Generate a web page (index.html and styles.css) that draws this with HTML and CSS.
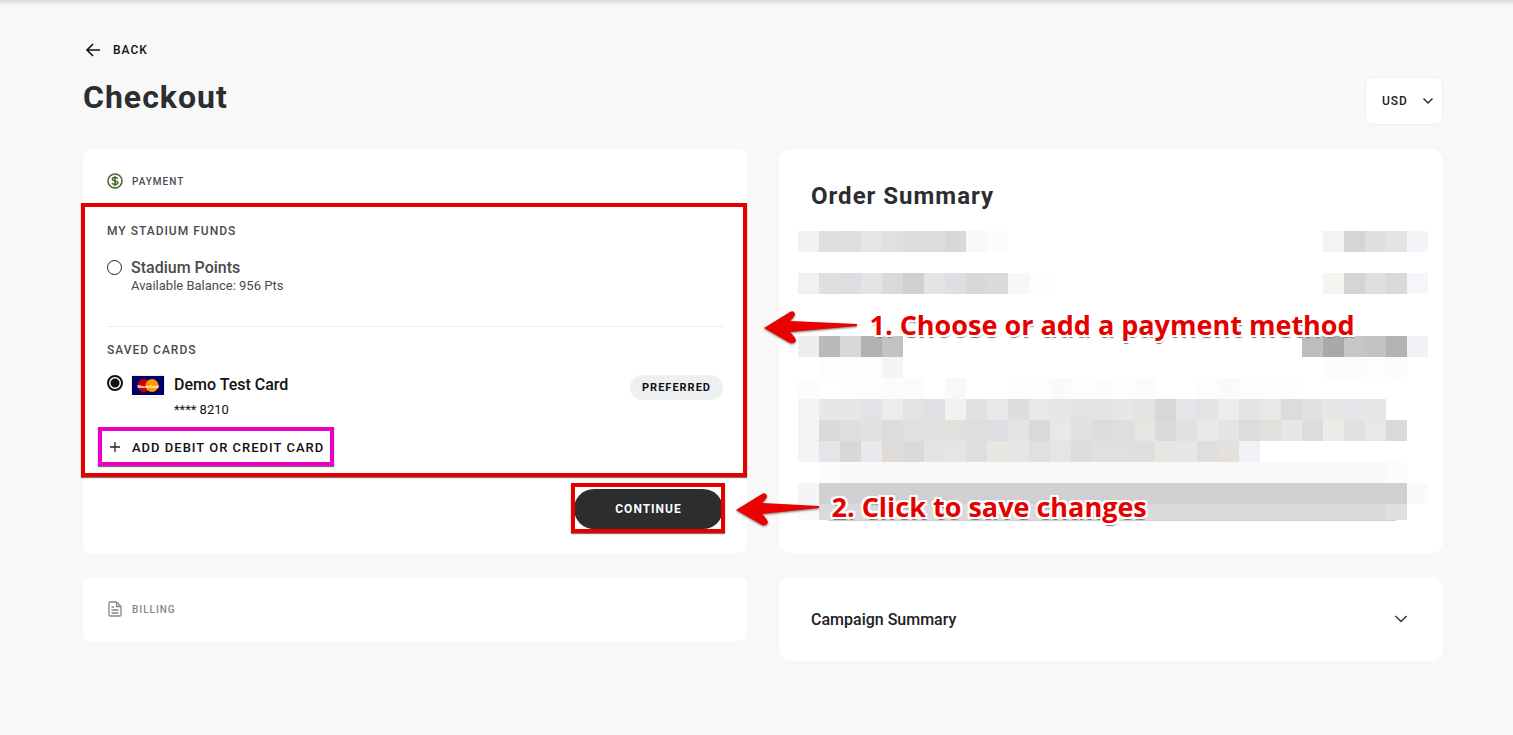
FILE: index.html
```
<!DOCTYPE html>
<html lang="en">
<head>
  <meta charset="UTF-8">
  <meta name="viewport" content="width=device-width, initial-scale=1.0">
  <title>Checkout</title>
  <link rel="stylesheet" href="styles.css">
</head>
<body>
  <main class="page">
    <a class="back" href="#">
      <svg width="20" height="16" viewBox="0 0 20 16"><path d="M17 8H4M10 2L4 8l6 6" fill="none" stroke="#111" stroke-width="1.6"/></svg>
      Back
    </a>

    <header class="page-header">
      <h1>Checkout</h1>
      <div class="currency">
        <select aria-label="Currency">
          <option>USD</option>
        </select>
        <svg class="chevron" width="12" height="8" viewBox="0 0 12 8"><path d="M1.5 1.5L6 6l4.500-4.500" fill="none" stroke="#222" stroke-width="1.4"/></svg>
      </div>
    </header>

    <div class="columns">
      <div class="column">
        <section class="card payment">
          <h2 class="step">
            <svg width="16" height="16" viewBox="0 0 16 16" fill="none" stroke="#44682c" stroke-width="1.5"><circle cx="8" cy="8" r="7"/><path d="M10.800 5.700C10.300 4.800 9.200 4.500 8 4.500c-1.500 0-2.700.6-2.700 1.700C5.300 8.600 10.900 7.300 10.900 9.800c0 1.100-1.300 1.700-2.900 1.700-1.300 0-2.500-.5-3-1.500M8 2.800v10.400"/></svg>
            Payment
          </h2>

          <div class="methods">
            <h3>My Stadium Funds</h3>
            <div class="option">
              <input type="radio" name="method" id="points">
              <label for="points">
                <span class="option-name muted">Stadium Points</span>
                <span class="balance">Available Balance: 956 Pts</span>
              </label>
            </div>

            <hr>

            <h3>Saved Cards</h3>
            <div class="option saved">
              <input type="radio" name="method" id="card" checked>
              <svg class="card-logo" width="34" height="23" viewBox="0 0 34 23">
                <rect x=".5" y=".5" width="33" height="22" fill="#fff" stroke="#eee"/>
                <rect x="1" y="1" width="32" height="19" fill="#000066"/>
                <circle cx="13" cy="10.500" r="6.500" fill="#cc0000"/>
                <circle cx="21" cy="10.500" r="6.500" fill="#ff9900"/>
                <text x="17" y="13" text-anchor="middle" class="logo-text">MasterCard</text>
              </svg>
              <label for="card">
                <span class="option-name">Demo Test Card</span>
                <span class="digits">**** 8210</span>
              </label>
              <span class="badge">Preferred</span>
            </div>

            <button class="add-card" type="button">
              <svg width="12" height="12" viewBox="0 0 12 12"><path d="M6 1v10M1 6h10" stroke="#222" stroke-width="1.300"/></svg>
              Add debit or credit card
            </button>
          </div>

          <div class="actions">
            <button class="continue" type="button">Continue</button>
          </div>
        </section>

        <section class="card billing">
          <h2 class="step disabled">
            <svg width="16" height="16" viewBox="0 0 16 16" fill="none" stroke="#85878c" stroke-width="1.300"><path d="M9.500 1H3.200Q2 1 2 2.200v11.600Q2 15 3.200 15h9.600q1.200 0 1.200-1.200V5.500zM9.500 1v4.500H14M4.500 6h2.500M4.500 9h7M4.500 12h7"/></svg>
            Billing
          </h2>
        </section>
      </div>

      <div class="column">
        <section class="card order">
          <h2>Order Summary</h2>
          <!-- order details are pixelated, cells are drawn by the script below -->
          <svg id="mosaic" class="mosaic" viewBox="0 0 630 290" shape-rendering="crispEdges"></svg>
        </section>

        <section class="card">
          <button class="campaign" type="button">
            Campaign Summary
            <svg width="14" height="10" viewBox="0 0 14 10"><path d="M1.500 2L7 7.500 12.500 2" fill="none" stroke="#333" stroke-width="1.500"/></svg>
          </button>
        </section>
      </div>
    </div>

    <!-- Annotations -->
    <div class="mark mark-methods"></div>
    <div class="mark mark-add"></div>
    <div class="mark mark-continue"></div>
    <div class="note note-choose">
      <svg width="96" height="36" viewBox="0 0 96 36"><path d="M1 18L27 2q4-2 5 2 0 2-5 7l67 3v2l-67 6q5 5 6 8-1 4-6 3z" fill="#e90000"/></svg>
      <span>1. Choose or add a payment method</span>
    </div>
    <div class="note note-save">
      <svg width="86" height="36" viewBox="0 0 86 36"><path d="M1 18L27 2q4-2 5 2 0 2-5 7l57 3v2l-57 6q5 5 6 8-1 4-6 3z" fill="#e90000"/></svg>
      <span>2. Click to save changes</span>
    </div>
  </main>

  <script>
    // each row: [row number, first column, colors]
    const rows = [
      [0, 0, 'f1f1f0 dfdfdf dedede e4e6e5 dfe1e0 dcdcdc dddddd d8d8d8 f8f8f8 fcfcfc'],
      [0, 25, 'f3f3f3 d5d5d5 dfdfdf e4e4e4 f4f5f8'],
      [2, 0, 'f1f1ef dfdfdf dddee1 e4e4e4 dadada d0d0d0 e4e4e4 dedfe2 d8d8d8 dadada f7f7f7 fcfefe'],
      [2, 25, 'f4f4f1 d5d5d5 dfdfdf d8d9db f5f6f9'],
      [5, 0, 'efeeec b8babc d6d8d7 b3b1af c2c3c5'],
      [5, 24, 'c0bebc a8a9ab c5c7c6 c3c3c3 b3b3b1 f1f2f7'],
      [6, 1, 'fdfdfd fdfdfd fdfdfd f4f4f4'],
      [6, 25, 'fcfcfc fcfcfc fdfdfd fcfcfc'],
      [7, 0, 'fcfcfa ffffff fdfdfd fdfdfd fcfcfc fbfbfa ffffff f8f8f8 ffffff ffffff fefefe fdfdfd fafafa fcfefe fcfcfc fdfdfd fbfbfb'],
      [7, 19, 'fcfefd fafafa fdfdfd fdfdfd fefefe'],
      [8, 0, 'f4f4f4 e6e8e7 e5e8e6 e1e3e6 ececec e4e3e0 dfe1e4 f2f2f2 e2e1df e8e8e8 dddddd e8e8e8 e8e6e4 e2e4e2 e3e3e3 e7e7e7 e4e4e4 d5d8d6 e3e5e8 e3e3e3 eaedeb e3e3e3 e8e8e8 dcdcdc e1e3e1 e7e7e7 e4e6e9 e4e7e5'],
      [9, 0, 'f3f3f3 d9d9d9 dfdfdf e1e1e1 dcdcdc e0e0e0 e0e0e0 e1e0dc dedede dddee1 e3e3e3 d9d9d9 e8e8e8 e1e1e1 dcdcdc dddee1 e5e5e2 dadada e0e0e0 e8e8e8 e4e4e4 dcdcdc e0e0dd e5e8e6 dcdcdc ebebe8 dfe2e0 e8e8e8 d9d9d9'],
      [10, 0, 'f3f3f3 e3e5e8 dad8d6 e7e9ec dedbd9 d9d9d9 e3e3e3 e5e5e5 dcdee1 e7e7e4 e4e7e5 dee1df e5e5e5 dddddd e0e0e0 e0e0e0 dde0de e6e6e3 e6e6e6 dedede e3e0de f0f1f5'],
      [11, 1, 'fcfcfc' + ' f9f9f9'.repeat(26) + ' fcfcfc'],
      [12, 0, 'f5f5f5' + ' d0d0d2'.repeat(28) + ' fafafa'],
      [13, 0, 'f9f9f9' + ' dadadc'.repeat(27) + ' dfdfdf']
    ];
    const size = 21;
    let cells = '';
    rows.forEach(([row, start, colors]) => {
      const height = row === 13 ? 16 : size;
      colors.split(' ').forEach((color, i) => {
        cells += `<rect x="${(start + i) * size}" y="${row * size}" width="${size}" height="${height}" fill="#${color}"/>`;
      });
    });
    cells += '<rect x="30" y="289" width="568" height="1" fill="#d0d0d2"/>';
    document.getElementById('mosaic').innerHTML = cells;
  </script>
</body>
</html>
```
FILE: styles.css
```
* {
  box-sizing: border-box;
}
body {
  margin: 0;
  background: linear-gradient(#d8d8d8, #f8f8f8 5px) no-repeat #f8f8f8;
  color: #111;
  font-family: Roboto, "Liberation Sans", sans-serif;
}
h1, h2, h3 {
  margin: 0;
}
button, select {
  font-family: inherit;
  border: none;
  background: none;
  cursor: pointer;
}
svg {
  flex-shrink: 0;
}
.page {
  position: relative;
  padding: 40px 70px 74px 83px;
}
.back {
  display: inline-flex;
  align-items: center;
  gap: 10px;
  height: 20px;
  color: #111;
  font-size: 12px;
  font-weight: 500;
  letter-spacing: 1px;
  text-decoration: none;
  text-transform: uppercase;
}
.page-header {
  display: flex;
  justify-content: space-between;
  align-items: flex-start;
  margin-top: 15px;
  margin-bottom: 24px;
}
h1 {
  color: #2b2d2f;
  font-size: 32px;
  line-height: 40px;
  letter-spacing: 1px;
}
.currency {
  position: relative;
}
.currency select {
  appearance: none;
  width: 78px;
  height: 48px;
  padding: 0 16px;
  border: 1px solid #eee;
  border-radius: 8px;
  background-color: #fff;
  color: #222;
  font-size: 12px;
  font-weight: 500;
  letter-spacing: 1px;
}
.chevron {
  position: absolute;
  right: 9px;
  top: 20px;
  pointer-events: none;
}

/* Cards */
.columns {
  display: grid;
  grid-template-columns: 1fr 1fr;
  gap: 32px;
  align-items: start;
}
.column {
  display: flex;
  flex-direction: column;
  gap: 24px;
}
.card {
  border-radius: 12px;
  background-color: #fff;
}
.payment, .billing {
  padding: 24px;
  border-radius: 8px;
}
.step {
  display: flex;
  align-items: center;
  gap: 9px;
  height: 16px;
  color: #4a4b4d;
  font-size: 10px;
  font-weight: 500;
  letter-spacing: 1px;
  text-transform: uppercase;
}
.disabled {
  color: #85878c;
}
.methods {
  padding-top: 34px;
}
h3 {
  color: #4a4b4d;
  font-size: 12px;
  font-weight: 500;
  line-height: 16px;
  letter-spacing: 1px;
  text-transform: uppercase;
}
.option {
  display: flex;
  align-items: flex-start;
  margin-top: 19px;
}
.option input {
  appearance: none;
  flex-shrink: 0;
  width: 15px;
  height: 15px;
  margin: 2px 9px 0 0;
  border: 1px solid #222;
  border-radius: 50%;
}
.option input:checked {
  width: 16px;
  height: 16px;
  margin: 0 8px 0 0;
  border: 2px solid #111;
  background: radial-gradient(#111 4px, #fff 5px);
}
.option label {
  display: flex;
  flex-direction: column;
}
.option-name {
  font-size: 16px;
  font-weight: 500;
  line-height: 20px;
}
.muted, .balance {
  color: #4a4b4d;
}
.balance {
  font-size: 13px;
  line-height: 16px;
}
hr {
  margin: 32px 0 15px;
  border: none;
  border-top: 1px solid #eee;
}
.saved {
  margin-top: 17px;
}
.card-logo {
  margin-right: 9px;
}
.logo-text {
  fill: #fff;
  font-size: 4px;
  font-weight: bold;
}
.digits {
  margin-top: 6px;
  font-size: 13px;
  line-height: 18px;
}
.badge {
  margin-left: auto;
  padding: 0 12px;
  border-radius: 13px;
  background-color: #eeeff1;
  font-size: 11px;
  font-weight: 700;
  line-height: 25px;
  letter-spacing: 1px;
  text-transform: uppercase;
}
.add-card {
  display: flex;
  align-items: center;
  gap: 11px;
  height: 32px;
  margin-top: 12px;
  padding: 0 2px;
  color: #111;
  font-size: 13px;
  font-weight: 500;
  letter-spacing: 1px;
  text-transform: uppercase;
}
.actions {
  display: flex;
  justify-content: flex-end;
  margin-top: 26px;
}
.continue {
  width: 149px;
  height: 40px;
  border-radius: 20px;
  background-color: #2b2d2f;
  color: #fff;
  font-size: 12px;
  font-weight: 700;
  letter-spacing: 1px;
  text-transform: uppercase;
}
.order {
  padding-bottom: 32px;
}
.order h2 {
  padding: 32px 32px 20px;
  color: #2b2d2f;
  font-size: 24px;
  line-height: 30px;
  letter-spacing: 1px;
}
.mosaic {
  display: block;
  margin: 0 15px 0 19px;
}
.campaign {
  display: flex;
  justify-content: space-between;
  align-items: center;
  width: 100%;
  height: 84px;
  padding: 0 35px 0 32px;
  color: #222;
  font-size: 16px;
  font-weight: 500;
}

/* Annotations drawn over the page */
.mark {
  position: absolute;
  border: 4px solid #e50000;
  box-shadow: 0 1px 1px #777;
  pointer-events: none;
}
.mark-methods {
  left: 81px;
  top: 203px;
  width: calc(50% - 91px);
  height: 274px;
}
.mark-add {
  left: 98px;
  top: 427px;
  width: 236px;
  height: 39px;
  border-color: #e800c4;
}
.mark-continue {
  right: calc(50% + 32px);
  top: 483px;
  width: 154px;
  height: 50px;
}
.note {
  position: absolute;
  display: flex;
  align-items: flex-start;
  gap: 11px;
  color: #e50000;
  font-family: "Open Sans", "Noto Sans", sans-serif;
  font-size: 27px;
  font-weight: 700;
  line-height: 30px;
  white-space: nowrap;
  pointer-events: none;
}
.note span {
  text-shadow: 2px 0 #fff, -2px 0 #fff, 0 2px #fff, 0 -2px #fff, 2px 2px #fff, -2px 2px #fff, 2px -2px #fff, -2px -2px #fff, 1px 3px 1px #777;
}
.note svg {
  filter: drop-shadow(0 1px 1px #777);
}
.note-choose {
  left: calc(50% + 6px);
  top: 310px;
}
.note-save {
  left: calc(50% - 22px);
  top: 492px;
}
```
